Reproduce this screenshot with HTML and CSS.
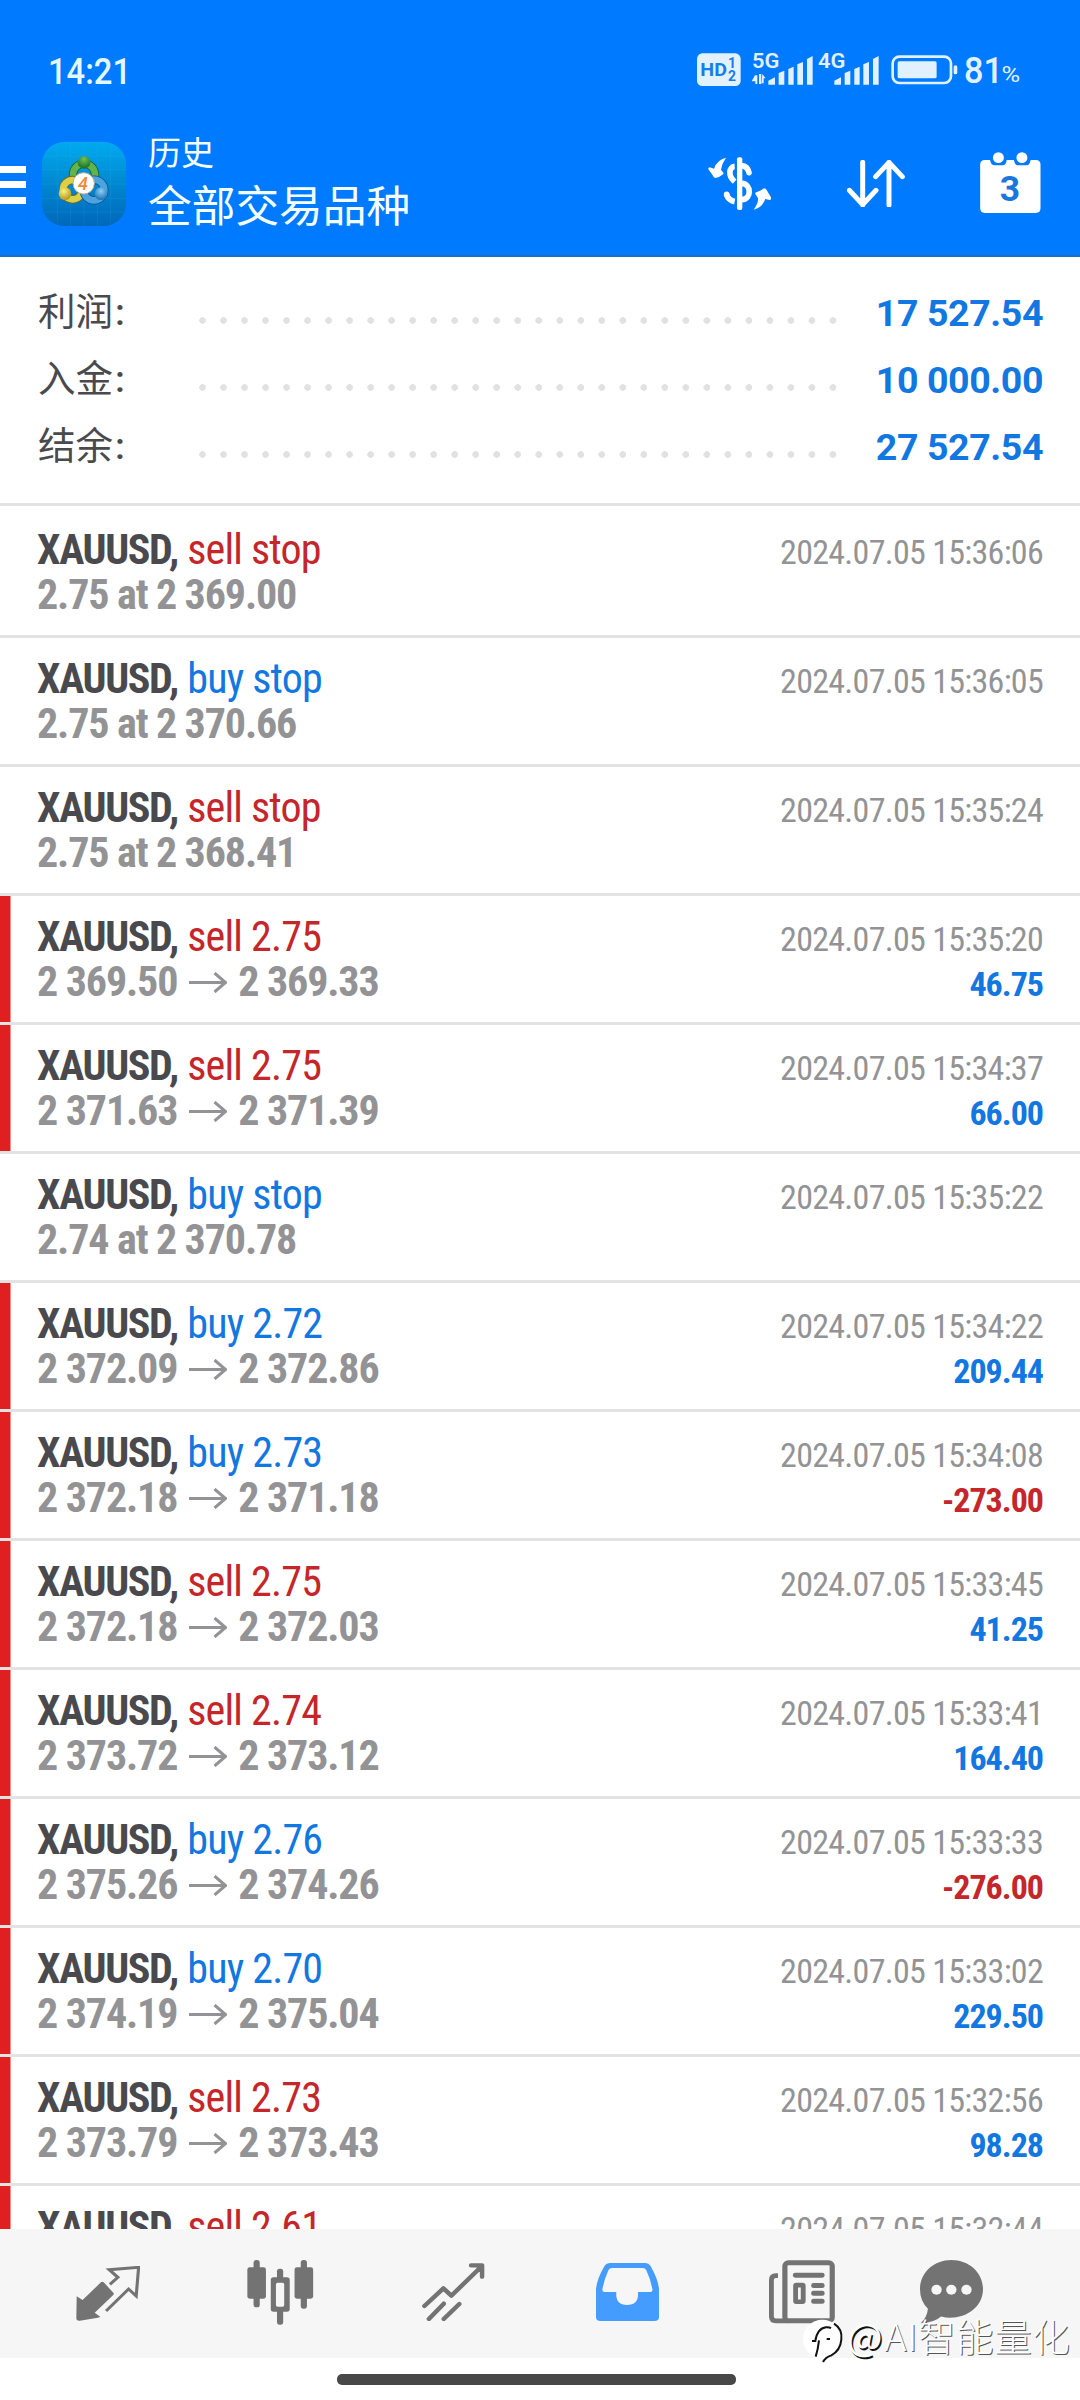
FILE: index.html
```html
<!DOCTYPE html>
<html lang="zh-CN">
<head>
<meta charset="utf-8">
<title>历史</title>
<link rel="stylesheet" href="styles.css">
</head>
<body>
<svg class="defs" width="0" height="0"><symbol id="arrow" viewBox="0 0 38 21"><path d="M0 10.5H36M25.5 1L36.5 10.5L25.5 20" fill="none" stroke="#939395" stroke-width="3"/></symbol></svg>
<div class="screen">
  <header class="header">
    <div class="status">
      <svg class="clock" width="90" height="44" viewBox="0 0 90 44"><text x="0" y="33.5" textLength="83" lengthAdjust="spacingAndGlyphs">14:21</text></svg>
      <svg class="indicators" width="323.3" height="45" viewBox="110 50 970 135">
        <rect x="110" y="69" width="131" height="98" rx="16" fill="#e2f1ff"/>
        <g fill="#1a7ce6" font-weight="700">
          <text x="120" y="138" font-size="57" textLength="80" lengthAdjust="spacingAndGlyphs">HD</text>
          <text x="203" y="114" font-size="42">1</text>
          <text x="203" y="153" font-size="42">2</text>
        </g>
        <g fill="#e2f1ff">
          <g font-weight="600" font-size="58">
            <text x="275" y="114" textLength="82" lengthAdjust="spacingAndGlyphs">5G</text>
            <text x="473" y="114" textLength="82" lengthAdjust="spacingAndGlyphs">4G</text>
          </g>
          <path d="M284 135h7v26h-6v-8h-11zM296 131h7v30h-7zM306 131l10 13h-6v15h-6z"/>
          <path d="M324 163v-12l20-10v22zM355 163v-35l17-7v42zM384 163v-47l16-7v54zM411 163v-61l17-7v68zM440 163v-77l17-9v86z"/>
          <path d="M522 163v-12l20-10v22zM553 163v-35l17-7v42zM582 163v-47l16-7v54zM609 163v-61l17-7v68zM638 163v-77l17-9v86z"/>
          <rect x="697" y="79" width="175" height="79" rx="20" fill="none" stroke="#e2f1ff" stroke-width="8"/>
          <rect x="712" y="93" width="117" height="51" rx="5"/>
          <rect x="880" y="105" width="11" height="27" rx="5"/>
          <text x="911" y="158" font-size="112" font-weight="500" textLength="117" lengthAdjust="spacingAndGlyphs">81</text>
          <text x="1024" y="156" font-size="64" textLength="56" lengthAdjust="spacingAndGlyphs">%</text>
        </g>
      </svg>
    </div>
    <div class="appbar">
      <div class="burger"><i></i><i></i><i></i></div>
      <svg class="logo" width="84" height="84" viewBox="0 0 252 252">
        <defs>
          <linearGradient id="sky" x1="0" y1="0" x2="0" y2="1"><stop offset="0" stop-color="#00aaf0"/><stop offset=".5" stop-color="#0088d0"/><stop offset="1" stop-color="#0067bb"/></linearGradient>
          <radialGradient id="green" cx=".5" cy=".25" r=".7"><stop offset="0" stop-color="#6fc05a"/><stop offset="1" stop-color="#1a7424"/></radialGradient>
          <radialGradient id="gold" cx=".4" cy=".3" r=".7"><stop offset="0" stop-color="#fff07a"/><stop offset="1" stop-color="#b39a1c"/></radialGradient>
          <radialGradient id="azure" cx=".5" cy=".3" r=".7"><stop offset="0" stop-color="#8ad0f8"/><stop offset="1" stop-color="#1c70b4"/></radialGradient>
        </defs>
        <rect width="252" height="252" rx="66" fill="url(#sky)"/>
        <path d="M46 8V244M86 0V252M126 0V252M166 0V252M206 8V244M8 42H244M0 82H252M0 126H252M0 170H252M8 210H244" stroke="#5cc8ef" stroke-opacity=".16" stroke-width="2"/>
        <circle cx="126" cy="98" r="33" fill="none" stroke="#145a3c" stroke-width="25"/>
        <circle cx="126" cy="98" r="33" fill="none" stroke="#62b34c" stroke-width="20"/>
        <circle cx="92" cy="143" r="29" fill="none" stroke="#6b6a26" stroke-width="25"/>
        <circle cx="92" cy="143" r="29" fill="none" stroke="#dcd04a" stroke-width="20"/>
        <circle cx="156" cy="144" r="31" fill="none" stroke="#0f528f" stroke-width="25"/>
        <circle cx="156" cy="144" r="31" fill="none" stroke="#4ba4de" stroke-width="20"/>
        <circle cx="126" cy="61" r="19" fill="url(#green)"/>
        <circle cx="69" cy="155" r="19" fill="url(#gold)"/>
        <circle cx="177" cy="155" r="19" fill="url(#azure)"/>
        <circle cx="125" cy="124" r="32" fill="#fff" stroke="#b9b08a" stroke-width="3"/>
        <text x="108" y="143" font-size="54" font-style="italic" font-weight="500" fill="#f08a38">4</text>
      </svg>
      <div class="titles"><div class="sub">历史</div><div class="main">全部交易品种</div></div>
      <div class="actions">
        <svg class="dollar" width="63.3" height="53.3" viewBox="24 35 190 160">
          <rect x="111" y="36" width="16" height="158" rx="6" fill="#fff"/>
          <g fill="none" stroke="#fff" stroke-width="17">
            <path d="M104 63C88 64 82 90 104 109"/>
            <path d="M124 61Q143 62 147 82" stroke-linecap="round"/>
            <path d="M126 114C154 116 156 161 126 163"/>
            <path d="M80 148Q85 165 104 169"/>
            <path d="M80 147V148" stroke-linecap="round"/>
          </g>
          <path d="M78 37Q66 54 63 73L71 84Q71 88 66 89Q57 97 46 98Q41 98 38 90L25 72Q24 67 29 66L42 70Q51 43 78 37Z" fill="#fff"/>
          <path d="M161 193Q176 173 174 158L166 146Q165 141 171 140Q183 136 190 130Q196 127 200 134L214 157Q215 163 209 164L196 161Q187 187 161 193Z" fill="#fff"/>
        </svg>
        <svg class="sort" width="57.7" height="47.3" viewBox="560 389 173 142"><path d="M607 396V524M567 480L607 523L647 480M686 524V396M646 439L686 396L726 439" fill="none" stroke="#fff" stroke-width="15" stroke-linecap="round" stroke-linejoin="round"/></svg>
        <svg class="calendar" width="61" height="61" viewBox="960 365 183 184">
          <path d="M974 389H990Q992 405 1004 405H1028Q1038 405 1040 389H1062Q1064 405 1074 405H1100Q1110 405 1112 389H1128Q1142 389 1142 403V535Q1142 549 1128 549H974Q960 549 960 535V403Q960 389 974 389Z" fill="#fff"/>
          <circle cx="1015" cy="382" r="16.5" fill="#fff"/><circle cx="1086" cy="382" r="16.5" fill="#fff"/>
          <text x="1050" y="514" font-size="107" font-weight="700" text-anchor="middle" fill="#1a78dc">3</text>
        </svg>
      </div>
    </div>
  </header>

  <main class="content">
    <section class="summary">
      <div class="total"><span class="label">利润<b>:</b></span><span class="dots"></span><span class="sum">17 527.54</span></div>
      <div class="total"><span class="label">入金<b>:</b></span><span class="dots"></span><span class="sum">10 000.00</span></div>
      <div class="total"><span class="label">结余<b>:</b></span><span class="dots"></span><span class="sum">27 527.54</span></div>
    </section>
    <section class="list">
      <article class="row"><div><div class="name">XAUUSD, <span class="sell">sell stop</span></div><div class="price">2.75 at 2 369.00</div></div><div class="meta"><time>2024.07.05 15:36:06</time></div></article>
      <article class="row"><div><div class="name">XAUUSD, <span class="buy">buy stop</span></div><div class="price">2.75 at 2 370.66</div></div><div class="meta"><time>2024.07.05 15:36:05</time></div></article>
      <article class="row"><div><div class="name">XAUUSD, <span class="sell">sell stop</span></div><div class="price">2.75 at 2 368.41</div></div><div class="meta"><time>2024.07.05 15:35:24</time></div></article>
      <article class="row deal"><div><div class="name">XAUUSD, <span class="sell">sell 2.75</span></div><div class="price">2 369.50<svg class="arrow"><use href="#arrow"/></svg>2 369.33</div></div><div class="meta"><time>2024.07.05 15:35:20</time><div class="gain">46.75</div></div></article>
      <article class="row deal"><div><div class="name">XAUUSD, <span class="sell">sell 2.75</span></div><div class="price">2 371.63<svg class="arrow"><use href="#arrow"/></svg>2 371.39</div></div><div class="meta"><time>2024.07.05 15:34:37</time><div class="gain">66.00</div></div></article>
      <article class="row"><div><div class="name">XAUUSD, <span class="buy">buy stop</span></div><div class="price">2.74 at 2 370.78</div></div><div class="meta"><time>2024.07.05 15:35:22</time></div></article>
      <article class="row deal"><div><div class="name">XAUUSD, <span class="buy">buy 2.72</span></div><div class="price">2 372.09<svg class="arrow"><use href="#arrow"/></svg>2 372.86</div></div><div class="meta"><time>2024.07.05 15:34:22</time><div class="gain">209.44</div></div></article>
      <article class="row deal"><div><div class="name">XAUUSD, <span class="buy">buy 2.73</span></div><div class="price">2 372.18<svg class="arrow"><use href="#arrow"/></svg>2 371.18</div></div><div class="meta"><time>2024.07.05 15:34:08</time><div class="loss">-273.00</div></div></article>
      <article class="row deal"><div><div class="name">XAUUSD, <span class="sell">sell 2.75</span></div><div class="price">2 372.18<svg class="arrow"><use href="#arrow"/></svg>2 372.03</div></div><div class="meta"><time>2024.07.05 15:33:45</time><div class="gain">41.25</div></div></article>
      <article class="row deal"><div><div class="name">XAUUSD, <span class="sell">sell 2.74</span></div><div class="price">2 373.72<svg class="arrow"><use href="#arrow"/></svg>2 373.12</div></div><div class="meta"><time>2024.07.05 15:33:41</time><div class="gain">164.40</div></div></article>
      <article class="row deal"><div><div class="name">XAUUSD, <span class="buy">buy 2.76</span></div><div class="price">2 375.26<svg class="arrow"><use href="#arrow"/></svg>2 374.26</div></div><div class="meta"><time>2024.07.05 15:33:33</time><div class="loss">-276.00</div></div></article>
      <article class="row deal"><div><div class="name">XAUUSD, <span class="buy">buy 2.70</span></div><div class="price">2 374.19<svg class="arrow"><use href="#arrow"/></svg>2 375.04</div></div><div class="meta"><time>2024.07.05 15:33:02</time><div class="gain">229.50</div></div></article>
      <article class="row deal"><div><div class="name">XAUUSD, <span class="sell">sell 2.73</span></div><div class="price">2 373.79<svg class="arrow"><use href="#arrow"/></svg>2 373.43</div></div><div class="meta"><time>2024.07.05 15:32:56</time><div class="gain">98.28</div></div></article>
      <article class="row deal"><div><div class="name">XAUUSD, <span class="sell">sell 2.61</span></div></div><div class="meta"><time>2024.07.05 15:32:44</time></div></article>
    </section>
  </main>

  <nav class="tabs">
    <svg class="quotes" width="64" height="55" viewBox="220 318 185 165" preserveAspectRatio="none">
      <path d="M222 409L239 420L292 367Q296 363 300 367L328 398Q331 402 327 406L274 458L290 470Q289 472 283 473L231 482Q221 483 221 474Z" fill="#737373"/>
      <path d="M318 373L341 352L316 329L401 322L394 408L372 387L307 453" fill="none" stroke="#737373" stroke-width="9"/>
    </svg>
    <svg class="charts" width="66.5" height="65" viewBox="717 301 193 195" preserveAspectRatio="none" fill="#737373">
      <rect x="718" y="323" width="54" height="94" rx="7"/><rect x="736" y="301" width="18" height="142" rx="8"/>
      <rect x="855" y="323" width="54" height="94" rx="7"/><rect x="873" y="301" width="18" height="146" rx="8"/>
      <rect x="804" y="327" width="18" height="35" rx="8"/><rect x="804" y="448" width="18" height="47" rx="8"/>
      <path fill-rule="evenodd" d="M794 353H833Q841 353 841 361V448Q841 456 833 456H794Q786 456 786 448V361Q786 353 794 353ZM806 369Q801 369 801 374V436Q801 441 806 441H820Q825 441 825 436V374Q825 369 820 369Z"/>
    </svg>
    <svg class="trade" width="62.5" height="58" viewBox="1226 309 181 174" preserveAspectRatio="none" fill="none" stroke="#737373" stroke-width="13" stroke-linecap="round" stroke-linejoin="round">
      <path d="M1233 438L1288 385L1311 407L1399 319M1368 316H1400V350M1246 477L1289 431M1289 477L1334 432"/><path d="M1380 318L1399 337V318Z" fill="#737373" stroke="none"/>
    </svg>
    <svg class="history" width="63" height="58" viewBox="162 309 183 174" preserveAspectRatio="none">
      <path fill="#459cff" fill-rule="evenodd" d="M202 309H306Q315 309 320 317Q344 360 345 389V470Q345 483 332 483H175Q162 483 162 470V389Q163 360 187 317Q192 309 202 309ZM209 324Q201 324 198 331Q187 356 181 385Q179 396 186 396H221Q218 435 252 435Q287 435 284 396H320Q327 396 326 389Q320 356 308 331Q305 324 298 324Z"/>
    </svg>
    <svg class="news" width="66" height="63.5" viewBox="664 301 191 190" preserveAspectRatio="none">
      <g fill="none" stroke="#737373"><rect x="710" y="309" width="137" height="174" rx="10" stroke-width="15"/><path d="M690 348H684Q671 348 671 361V470Q671 483 684 483H720" stroke-width="14"/><rect x="741" y="376" width="22" height="50" rx="2" stroke-width="14"/></g>
      <g fill="#737373"><rect x="733" y="339" width="92" height="15" rx="7"/><rect x="786" y="370" width="39" height="15" rx="7"/><rect x="786" y="393" width="39" height="15" rx="7"/><rect x="786" y="417" width="39" height="15" rx="7"/></g>
    </svg>
    <svg class="chat" width="63" height="63.5" viewBox="1102 301 183 190" preserveAspectRatio="none">
      <path fill="#737373" d="M1193 301C1245 301 1285 339 1285 388C1285 441 1238 474 1190 474Q1177 474 1163 470Q1145 488 1104 490Q1123 472 1125 447Q1102 424 1102 388C1102 339 1142 301 1193 301Z"/>
      <g fill="#f6f6f6"><circle cx="1150" cy="390" r="15"/><circle cx="1193" cy="390" r="15"/><circle cx="1237" cy="390" r="15"/></g>
    </svg>
  </nav>
  <div class="home"><i></i></div>
  <div class="watermark">
    <svg width="42" height="46" viewBox="36 28 126 138">
      <circle cx="97" cy="88" r="58" fill="#fff"/>
      <path d="M66 94H76Q82 56 108 53Q118 52 123 56M87 92Q84 120 77 141M132 42Q158 58 154 90Q151 123 124 137Q106 143 99 157M110 88H120" fill="none" stroke="#111" stroke-width="6"/>
    </svg>
    <span><b>@</b>AI智能量化</span>
  </div>
</div>
</body>
</html>
```
FILE: styles.css
```css
* { box-sizing: border-box; }
body { margin: 0; background: #fff; font-family: Roboto, "Noto Sans CJK SC", sans-serif; }
.defs { position: absolute; }
svg { display: block; flex: none; }
svg text { font-family: Roboto, sans-serif; }
.screen { position: relative; width: 1080px; height: 2400px; overflow: hidden; display: flex; flex-direction: column; }

.header { height: 257px; flex: none; background: #007aff; border-bottom: 2px solid #1c6fc4; color: #fff; }
.status { height: 110px; display: flex; align-items: flex-start; justify-content: space-between; padding: 46.7px 60px 0 48px; }
.clock { margin-top: 3px; fill: #e2f9ff; font-size: 37.5px; font-weight: 500; }
.appbar { height: 145px; display: flex; align-items: flex-start; }
.burger { width: 26px; margin-top: 55.5px; display: flex; flex-direction: column; gap: 8.5px; }
.burger i { height: 7px; background: #fff; }
.logo { margin: 32px 0 0 16px; }
.titles { margin: 20px 0 0 22px; font-weight: 400; color: #f4ffff; }
.sub { font-size: 33px; line-height: 48px; }
.main { font-size: 43.7px; line-height: 59px; }
.actions { margin-left: auto; padding-right: 39px; display: flex; align-items: flex-start; }
.dollar { margin-top: 46.5px; }
.sort { margin: 49.5px 0 0 76px; }
.calendar { margin: 41.7px 0 0 75.5px; }

.content { height: 1972px; flex: none; overflow: hidden; }
.summary { padding: 23px 38px 22px; border-bottom: 3px solid #e3e3e3; }
.total { display: flex; height: 67px; line-height: 67px; font-size: 37.5px; }
.label { width: 161px; color: #4a4a4e; line-height: 65px; }
.label b { font-weight: 500; margin-left: 2px; }
.dots { width: 651px; background: radial-gradient(circle at 3.5px 3.5px, #e1e1e3 3px, transparent 3.6px) 0 37px / 21.03px 7px repeat-x; }
.sum { margin: 0 -1px 0 auto; font-weight: 700; letter-spacing: -.4px; color: #1277e1; }

.list { padding-top: 3px; }
.row { height: 129px; display: flex; justify-content: space-between; padding: 18px 37px 0 37px; border-bottom: 3px solid #e3e3e3; font-stretch: 75%; line-height: 45px; }
.deal { background: linear-gradient(#e01f20, #e01f20) 0 0 / 10.5px 126px no-repeat; }
.name, .price { font-size: 42px; font-weight: 700; white-space: nowrap; }
.name { color: #4a4a4e; letter-spacing: -1.35px; }
.name span { font-weight: 400; letter-spacing: -.8px; margin-left: 1px; }
.price { color: #939395; letter-spacing: -1.12px; display: flex; }
.arrow { width: 38px; height: 21px; margin: 12.5px 11.5px 0; }
.meta { margin-top: 2.5px; font-size: 34px; letter-spacing: -.72px; text-align: right; color: #939395; }
.meta time { display: block; }
.gain, .loss { font-weight: 700; letter-spacing: -1px; }
.buy { color: #1277e1; }
.gain { color: #1277e1; }
.sell, .loss { color: #c4262a; }

.tabs { height: 129px; flex: none; background: #f6f6f6; display: flex; align-items: flex-start; padding-left: 76px; }
.quotes { margin-top: 37px; }
.charts { margin: 31px 0 0 107px; }
.trade { margin: 34px 0 0 108.5px; }
.history { margin: 34px 0 0 111px; }
.news { margin: 31px 0 0 110px; }
.chat { margin: 31px 0 0 85px; }
.home { height: 42px; padding-top: 16px; display: flex; justify-content: center; align-items: flex-start; }
.home i { width: 399px; height: 10.5px; border-radius: 5px; background: #484848; margin-right: 7px; }
.watermark { position: absolute; left: 802px; top: 2319px; display: flex; color: #fff; font: 300 37.5px/42px "Noto Sans CJK SC", sans-serif; letter-spacing: .6px; text-shadow: 1px 1px 0 #555; }
.watermark span { margin: -5px 0 0 3px; white-space: nowrap; }
.watermark b { font-weight: 400; letter-spacing: 2px; text-shadow: 1.5px 1.5px 0 #111; }
```
